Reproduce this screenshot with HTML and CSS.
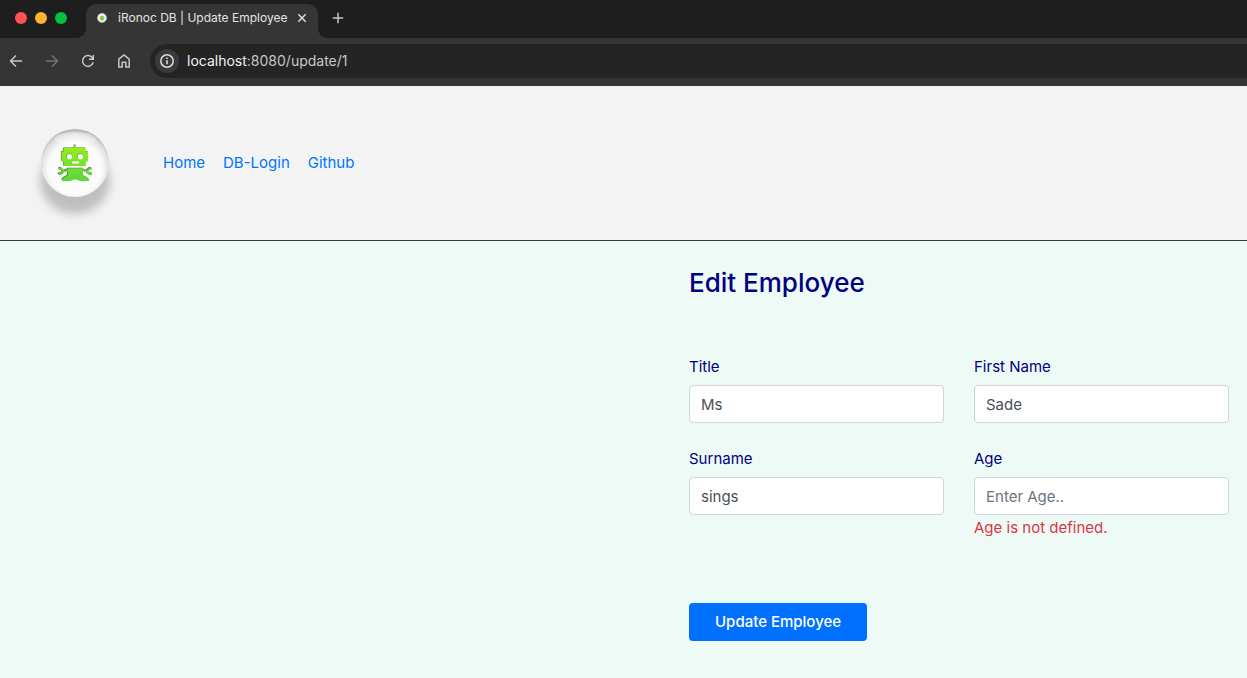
FILE: index.html
```html
<!DOCTYPE html>
<html lang="en">
<head>
<meta charset="utf-8">
<title>iRonoc DB | Update Employee</title>
<link rel="stylesheet" href="styles.css">
</head>
<body>
<div class="browser">
  <div class="tabstrip">
    <div class="lights"><span class="light light-close"></span><span class="light light-min"></span><span class="light light-max"></span></div>
    <div class="tab">
      <svg class="favicon" viewBox="0 0 12 12" aria-hidden="true"><circle cx="6" cy="6.400" r="4.800" fill="#777"/><circle cx="6" cy="5.800" r="4.600" fill="#ececec"/><rect x="4.200" y="4" width="3.600" height="4.200" rx="1" fill="#7bc83c"/></svg>
      <span class="tab-title">iRonoc DB | Update Employee</span>
      <button class="icon-button" aria-label="Close tab"><svg width="10" height="10" viewBox="0 0 10 10"><path d="M1.300 1.300l7.400 7.400M8.700 1.300L1.300 8.700" stroke="#dedede" stroke-width="1.500"/></svg></button>
    </div>
    <button class="icon-button new-tab" aria-label="New tab"><svg width="12" height="12" viewBox="0 0 12 12"><path d="M6 .8v10.400M.8 6h10.400" stroke="#c7c7c7" stroke-width="1.500"/></svg></button>
  </div>
  <div class="toolbar">
    <div class="nav-buttons">
      <button class="icon-button" aria-label="Back"><svg width="16" height="16" viewBox="0 0 16 16"><path d="M14 8H3M8 2.500L2.500 8 8 13.500" class="stroke"/></svg></button>
      <button class="icon-button dim" aria-label="Forward"><svg width="16" height="16" viewBox="0 0 16 16"><path d="M2 8h11M8 2.500L13.500 8 8 13.500" class="stroke"/></svg></button>
      <button class="icon-button" aria-label="Reload"><svg width="16" height="16" viewBox="0 0 16 16"><path d="M13.200 9.300A5.400 5.400 0 1 1 12.600 5.200M13.300 2v4.200H9" class="stroke"/></svg></button>
      <button class="icon-button" aria-label="Home page"><svg width="16" height="16" viewBox="0 0 16 16"><path d="M2.800 6.200L8 2l5.200 4.200v7.900H9.800V9.200H6.200v4.900H2.800z" class="stroke"/></svg></button>
    </div>
    <div class="address">
      <button class="site-info" aria-label="Site information"><svg width="16" height="16" viewBox="0 0 16 16"><circle cx="8" cy="8" r="6.200" class="stroke"/><path d="M8 7.300v4M8 4.500v1.500" class="stroke"/></svg></button>
      <span class="url"><span class="host">localhost</span>:8080/update/1</span>
    </div>
  </div>
</div>
<header class="site-header">
  <a class="logo" href="#" aria-label="iRonoc">
    <svg width="90" height="86" viewBox="0 0 90 86">
      <defs>
        <radialGradient id="ball" cx=".5" cy=".58" r=".59"><stop offset="0" stop-color="#fff"/><stop offset=".66" stop-color="#fbfbfb"/><stop offset=".85" stop-color="#e0e0e0"/><stop offset="1" stop-color="#a8a8a8"/></radialGradient>
        <linearGradient id="green" gradientUnits="userSpaceOnUse" x1="0" y1="25" x2="0" y2="61"><stop offset="0" stop-color="#9af01c"/><stop offset="1" stop-color="#5bd63e"/></linearGradient>
        <filter id="soft" x="-40%" y="-40%" width="180%" height="180%"><feGaussianBlur stdDeviation="5"/></filter>
        <g id="robot">
          <path d="M44.300 28v-3h1.800v3h9.700v3.600H58v9.800h-2.200V46H33.500v-4.600h-2v-9.800h2V28zM37.600 48.300h15.400v6.800c1 1.500 6 2 6.300 5.400-3 1-7.500.9-10.300 0l-3.700-1.200-3.700 1.200c-2.800.9-7.300 1-9.600 0 .3-3.400 4.600-3.900 5.600-5.400z" stroke="none"/>
          <path d="M29 49.200A2.600 2.600 0 1 1 28.600 53.400M33.500 51.600L39 49.600M61.600 49.200A2.600 2.600 0 1 0 62 53.400M57.100 51.600L51.600 49.600" fill="none" stroke-width="2"/>
        </g>
      </defs>
      <ellipse cx="45" cy="61" rx="35" ry="33" fill="#777" opacity=".42" filter="url(#soft)"/>
      <circle cx="45" cy="43" r="34" fill="url(#ball)"/>
      <ellipse cx="45" cy="19" rx="21" ry="7" fill="#fff" opacity=".3"/>
      <use href="#robot" x="-.6" y="-.6" fill="#4e7539" stroke="#4e7539"/>
      <use href="#robot" fill="url(#green)" stroke="#69d738"/>
      <circle cx="39.300" cy="36.300" r="3" fill="#58ae26"/><circle cx="50.300" cy="36.300" r="3" fill="#58ae26"/>
      <circle cx="39.500" cy="36.700" r="2.600" fill="#fff"/><circle cx="50.500" cy="36.700" r="2.600" fill="#fff"/>
      <path d="M42 41.300h7v2.200h-7z" fill="#fff"/>
    </svg>
  </a>
  <nav class="site-nav"><a href="#">Home</a><a href="#">DB-Login</a><a href="#">Github</a></nav>
</header>
<main class="content">
  <form class="employee-form">
    <h1>Edit Employee</h1>
    <div class="fields">
      <div class="field"><label for="title">Title</label><input id="title" type="text" value="Ms"></div>
      <div class="field"><label for="first-name">First Name</label><input id="first-name" type="text" value="Sade"></div>
      <div class="field"><label for="surname">Surname</label><input id="surname" type="text" value="sings"></div>
      <div class="field"><label for="age">Age</label><input id="age" type="text" placeholder="Enter Age.." aria-describedby="age-error"><span class="error" id="age-error">Age is not defined.</span></div>
    </div>
    <button class="submit" type="submit">Update Employee</button>
  </form>
</main>
</body>
</html>
```
FILE: styles.css
```css
* { box-sizing: border-box; }
body {
  margin: 0;
  min-height: 100vh;
  background: #edfaf6;
  color: #000080;
  font: 16px/24px Inter, sans-serif;
}
a { color: #0075fb; text-decoration: none; }
button, input { font: inherit; }
svg { display: block; overflow: visible; }
.browser { background: #353535; color: #e3e3e3; }
.tabstrip { display: flex; align-items: flex-end; height: 38px; background: #1e1e1e; }
.lights { display: flex; gap: 8px; padding: 0 19px 14px 15px; }
.light { width: 12px; height: 12px; border-radius: 50%; }
.light-close { background: #ff5350; }
.light-min { background: #ffb22e; }
.light-max { background: #00c33b; }
.tab {
  position: relative;
  display: flex;
  align-items: center;
  width: 232px;
  height: 34px;
  padding: 0 11px 6px 10px;
  border-radius: 10px 10px 0 0;
  background: #353535;
  font-size: 12px;
}
.tab::before, .tab::after {
  content: "";
  position: absolute;
  bottom: 0;
  width: 10px;
  height: 10px;
}
.tab::before { right: 100%; background: radial-gradient(circle at 0 0, #1e1e1e 10px, #353535 10px); }
.tab::after { left: 100%; background: radial-gradient(circle at 100% 0, #1e1e1e 10px, #353535 10px); }
.favicon { width: 12px; height: 12px; margin-right: 10px; }
.tab-title { flex: 1; white-space: nowrap; }
.icon-button { display: grid; place-items: center; padding: 0; border: 0; background: none; color: #c7c7c7; }
.dim { color: #747474; }
.new-tab { margin: 0 0 14px 14px; }
.stroke { fill: none; stroke: currentColor; stroke-width: 1.5px; }
.toolbar { display: flex; align-items: center; height: 48px; padding: 0 0 2px 8px; }
.nav-buttons { display: flex; gap: 20px; margin-right: 18px; }
.address {
  display: flex;
  flex: 1;
  align-items: center;
  gap: 8px;
  height: 34px;
  padding-left: 5px;
  border-radius: 17px 0 0 17px;
  background: #242424;
}
.site-info { display: grid; place-items: center; width: 24px; height: 24px; padding: 0; border: 0; border-radius: 50%; background: #3a3a3a; color: #dedede; }
.url { color: #c7c7c7; font-size: 14px; }
.host { color: #f2f2f2; }
.site-header {
  display: flex;
  align-items: center;
  min-height: 155px;
  padding: 0 30px;
  border-bottom: 1px solid #343a40;
  background: #f3f3f3;
}
.site-nav { display: flex; gap: 18px; margin-left: 43px; }
.site-nav, .field, .submit { font-size: 15px; }
.content { display: flex; justify-content: flex-end; padding: 25px 18px 36px; }
.employee-form { width: 540px; }
h1 { margin: 0 0 55px; font-size: 26px; font-weight: 500; line-height: 34px; }
.fields { display: grid; grid-template-columns: 1fr 1fr; gap: 24px 30px; margin-bottom: 63px; }
.field { display: flex; flex-direction: column; }
.field label { margin-bottom: 6px; }
.field input {
  width: 100%;
  height: 38px;
  padding: 0 11px;
  border: 1px solid #ced4da;
  border-radius: 4px;
  background: #fff;
  color: #495057;
}
.field input::placeholder { color: #6c757d; opacity: 1; }
.error { margin-top: 1px; color: #dc3545; }
.submit { height: 38px; padding: 0 26px; border: 0; border-radius: 4px; background: #0070ff; color: #fff; font-weight: 500; }
```
